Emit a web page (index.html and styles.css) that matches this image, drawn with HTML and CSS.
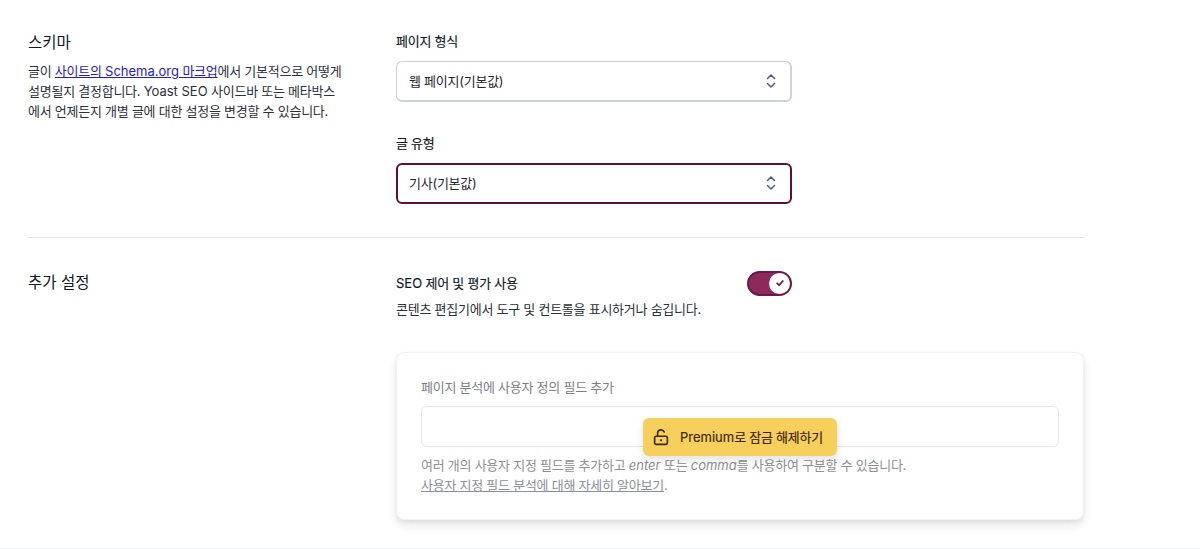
FILE: index.html
```html
<!DOCTYPE html>
<html lang="ko">
<head>
<meta charset="utf-8">
<title>스키마</title>
<link rel="stylesheet" href="styles.css">
</head>
<body>
<main class="page">
  <section class="section section-schema">
    <div class="intro">
      <h2 class="title">스키마</h2>
      <p class="intro-text">글이 <a class="link" href="#">사이트의 <span class="lat">Schema.org</span> 마크업</a>에서 기본적으로 어떻게<br>설명될지 결정합니다. <span class="lat">Yoast SEO</span> 사이드바 또는 메타박스<br>에서 언제든지 개별 글에 대한 설정을 변경할 수 있습니다.</p>
    </div>
    <div class="fields">
      <div class="field">
        <div class="label">페이지 형식</div>
        <div class="select">
          <span>웹 페이지(기본값)</span>
          <svg class="chevrons" viewBox="0 0 12 20" width="12" height="20"><path d="M2.5 7.5 6 4l3.5 3.5M2.5 12.5 6 16l3.5-3.5" fill="none" stroke="#4d5a85" stroke-width="1.5" stroke-linecap="round" stroke-linejoin="round"/></svg>
        </div>
      </div>
      <div class="field">
        <div class="label">글 유형</div>
        <div class="select select-active">
          <span>기사(기본값)</span>
          <svg class="chevrons" viewBox="0 0 12 20" width="12" height="20"><path d="M2.5 7.5 6 4l3.5 3.5M2.5 12.5 6 16l3.5-3.5" fill="none" stroke="#4d5a85" stroke-width="1.5" stroke-linecap="round" stroke-linejoin="round"/></svg>
        </div>
      </div>
    </div>
  </section>
  <section class="section section-extra">
    <div class="intro">
      <h2 class="title">추가 설정</h2>
    </div>
    <div class="fields-wide">
      <div class="toggle-block">
        <div class="toggle-row">
          <div class="label"><span class="lat">SEO</span> 제어 및 평가 사용</div>
          <div class="toggle">
            <span class="knob">
              <svg viewBox="0 0 12 12" width="10" height="10"><path d="M2.5 6.3 5 8.6l4.5-5" fill="none" stroke="#5c1a3c" stroke-width="2" stroke-linecap="round" stroke-linejoin="round"/></svg>
            </span>
          </div>
        </div>
        <p class="toggle-desc">콘텐츠 편집기에서 도구 및 컨트롤을 표시하거나 숨깁니다.</p>
      </div>
      <div class="card">
        <div class="card-label">페이지 분석에 사용자 정의 필드 추가</div>
        <div class="card-input"></div>
        <p class="card-help">여러 개의 사용자 지정 필드를 추가하고 <em class="lat">enter</em> 또는 <em class="lat">comma</em>를 사용하여 구분할 수 있습니다.<br><a class="card-link" href="#">사용자 지정 필드 분석에 대해 자세히 알아보기</a>.</p>
        <a class="unlock" href="#">
          <svg viewBox="0 0 18 18" width="18" height="18"><path d="M5.6 8.2V5.2a3.4 3.4 0 0 1 6.6-1.1" fill="none" stroke="#3a2500" stroke-width="1.6" stroke-linecap="round"/><rect x="2.6" y="8.2" width="12.8" height="8.2" rx="1.6" fill="none" stroke="#3a2500" stroke-width="1.6"/><circle cx="9" cy="12.3" r="1.1" fill="#3a2500"/></svg>
          <span><span class="lat">Premium</span>로 잠금 해제하기</span>
        </a>
      </div>
    </div>
  </section>
</main>
</body>
</html>
```
FILE: styles.css
```css
* { box-sizing: border-box; }
html, body { margin: 0; height: 549px; overflow: hidden; background: #fff; }
body {
  font-family: Inter, "Noto Sans CJK KR", sans-serif;
  font-size: 13px;
  line-height: 20px;
  letter-spacing: -0.25px;
  color: #1f2430;
}
.lat { letter-spacing: 0; }
.page { height: 549px; border-bottom: 1px solid #eef0f3; padding-left: 28px; }
.section { display: flex; width: 1056px; }
.section-schema { padding-top: 32px; height: 238px; border-bottom: 1px solid #e5e7eb; }
.section-extra { padding-top: 34px; }
.intro { width: 368px; flex: none; }
.title { margin: 0; padding-top: 1px; font-size: 15.5px; font-weight: 400; line-height: 20px; color: #111827; letter-spacing: 0; }
.intro-text { margin: 8px 0 0; color: #2b303b; white-space: nowrap; }
.link { color: #1f20c9; text-decoration: underline; }
.fields { width: 396px; display: flex; flex-direction: column; gap: 31px; margin-top: -1px; }
.fields-wide { width: 688px; }
.label { font-weight: 400; color: #111827; line-height: 20px; -webkit-text-stroke: 0.15px #111827; }
.select {
  margin-top: 10px;
  height: 41px;
  display: flex;
  align-items: center;
  justify-content: space-between;
  padding: 0 13px 0 12px;
  background: #fff;
  border: 1px solid #cdd1dc;
  border-bottom-width: 2px;
  border-right-width: 2px;
  border-radius: 6px;
  color: #1f2430;
}
.select-active { border: 2px solid #5e0f35; padding: 0 13px 1px 11px; }
.chevrons { display: block; }
.toggle-block { width: 396px; }
.toggle-row { display: flex; align-items: center; justify-content: space-between; height: 24px; margin-top: -1px; }
.toggle {
  width: 45px;
  height: 25px;
  border-radius: 13px;
  background: #8c2a5c;
  border: 2px solid #6b1a45;
  display: flex;
  align-items: center;
  justify-content: flex-end;
}
.knob {
  width: 21px;
  height: 21px;
  border-radius: 50%;
  background: #fff;
  display: flex;
  align-items: center;
  justify-content: center;
}
.toggle-desc { margin: 4px 0 0; color: #2b303b; }
.card {
  position: relative;
  margin-top: 33px;
  width: 688px;
  height: 168px;
  padding: 24px 24px 0;
  background: #fff;
  border: 1px solid #f0f1f3;
  border-radius: 8px;
  box-shadow: 0 6px 12px -2px rgba(17, 24, 39, 0.12), 0 2px 4px rgba(17, 24, 39, 0.06);
}
.card-label { color: #7b7f87; line-height: 20px; }
.card-input {
  margin-top: 9px;
  height: 41px;
  width: 638px;
  border: 1px solid #e5e7eb;
  border-radius: 6px;
  background: #fff;
}
.card-help { margin: 8px 0 0; color: #8b8f96; white-space: nowrap; }
.card-link { color: #8b8f96; text-decoration: underline; }
.unlock {
  position: absolute;
  left: 246px;
  top: 65px;
  width: 194px;
  height: 38px;
  display: flex;
  align-items: center;
  gap: 10px;
  padding-left: 9px;
  background: #f7cf5c;
  border-radius: 6px;
  color: #3a2500;
  text-decoration: none;
  box-shadow: 0 4px 8px rgba(17, 24, 39, 0.12);
  white-space: nowrap;
  -webkit-text-stroke: 0.15px #3a2500;
}
```
